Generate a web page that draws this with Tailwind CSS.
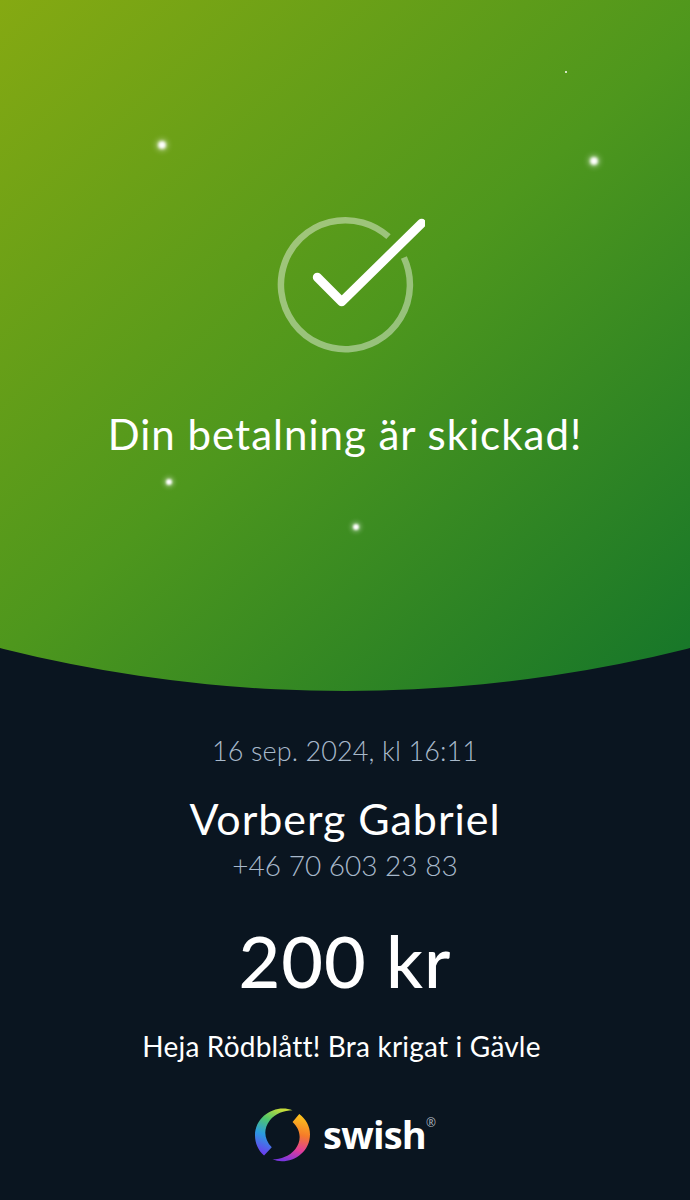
<!DOCTYPE html>
<html lang="en">
<head>
    <meta charset="UTF-8">
    <meta name="viewport" content="width=device-width, initial-scale=1.0">
    <title>Swish</title>
    <script src="https://cdn.jsdelivr.net/npm/@tailwindcss/browser@4"></script>
</head>
<body class="bg-[#0a1520] font-['Lato',sans-serif]">
    <div class="w-[690px] h-[1200px] overflow-hidden bg-[#0a1520]">

        <!-- Green header with curved bottom -->
        <div class="relative h-[692px] pt-[210px] bg-[linear-gradient(138deg,#85a912_0%,#4e971d_50%,#14752a_100%)] [clip-path:circle(1405px_at_345px_-714px)]">
            <!-- Sparkles -->
            <div class="absolute left-[158px] top-[141px] size-2 rounded-full bg-white blur-[1.5px] shadow-[0_0_5px_2px_rgba(255,255,255,0.4)]"></div>
            <div class="absolute left-[590px] top-[157px] size-2 rounded-full bg-white blur-[1.5px] shadow-[0_0_5px_2px_rgba(255,255,255,0.4)]"></div>
            <div class="absolute left-[565px] top-[71px] size-[1.5px] rounded-full bg-white"></div>
            <div class="absolute left-[166px] top-[479px] size-1.5 rounded-full bg-white blur-[1px] shadow-[0_0_4px_2px_rgba(255,255,255,0.4)]"></div>
            <div class="absolute left-[353px] top-[524px] size-1.5 rounded-full bg-white blur-[1px] shadow-[0_0_4px_2px_rgba(255,255,255,0.4)]"></div>

            <svg class="block mx-auto" width="160" height="150" viewBox="-80 -75 160 150" fill="none">
                <path d="M43.5 -48.3A64.5 64.5 0 1 0 58.9 -27.5" stroke="#fff" stroke-opacity="0.42" stroke-width="6.5"/>
                <path d="M-27.7 -7.7L-3.3 16.7L76.7 -61.7" stroke="#fff" stroke-width="9" stroke-linecap="round" stroke-linejoin="round"/>
            </svg>
            <h1 class="mt-[46px] text-center text-[42px] leading-[56px] font-normal tracking-[1px] text-white">Din betalning är skickad!</h1>
        </div>

        <!-- Payment details -->
        <div class="flex flex-col items-center mt-[43px]">
            <p class="text-[27px] leading-[32px] font-light tracking-[0.1px] text-[#a8b9cb]">16 sep. 2024, kl 16:11</p>
            <p class="mt-[27px] text-[43px] leading-[50px] font-normal tracking-[0.95px] text-white">Vorberg Gabriel</p>
            <p class="mt-[3px] text-[28px] leading-[36px] font-light text-[#a8b9cb]">+46 70 603 23 83</p>
            <p class="mt-[35px] text-[72px] leading-[84px] font-medium tracking-[1px] text-white">200 kr</p>
            <p class="mt-[27px] pr-[7px] text-[28px] leading-[34px] font-normal tracking-[0.2px] text-white">Heja Rödblått! Bra krigat i Gävle</p>

            <!-- Swish logo -->
            <div class="flex items-center mt-[44px]">
                <svg width="57" height="57" viewBox="15 52 170 170">
                    <defs>
                        <linearGradient id="blueBlade" x1="0.65" y1="0" x2="0.3" y2="1">
                            <stop offset="0" stop-color="#c6dc3a"/>
                            <stop offset="0.3" stop-color="#4fc66b"/>
                            <stop offset="0.62" stop-color="#2a9be0"/>
                            <stop offset="1" stop-color="#6a3cf0"/>
                        </linearGradient>
                        <linearGradient id="orangeBlade" x1="0.6" y1="0" x2="0.4" y2="1">
                            <stop offset="0" stop-color="#fcc21c"/>
                            <stop offset="0.4" stop-color="#f57a2a"/>
                            <stop offset="0.72" stop-color="#e23d9a"/>
                            <stop offset="1" stop-color="#7a36e0"/>
                        </linearGradient>
                    </defs>
                    <path d="M130 62C85 42 18 75 18 137C18 160 28 182 45 197L68 172C45 150 42 118 62 92C78 72 105 62 130 62Z" fill="url(#blueBlade)"/>
                    <path d="M70 208C115 228 182 195 182 133C182 110 170 88 150 73L130 97C155 120 158 152 138 178C122 198 95 208 70 208Z" fill="url(#orangeBlade)"/>
                </svg>
                <span class="ml-[12px] -mt-[3px] text-[38px] leading-[50px] font-bold text-white font-['Open_Sans',sans-serif] tracking-[-0.8px]">swish</span>
                <span class="self-start mt-[9px] text-[12px] leading-[14px] text-[#aab4bf] font-['Open_Sans',sans-serif]">®</span>
            </div>
        </div>
    </div>
</body>
</html>
